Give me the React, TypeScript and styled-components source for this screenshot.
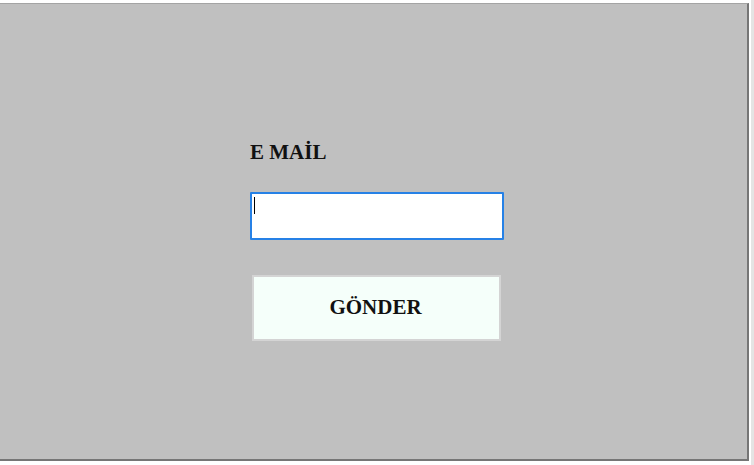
import React from "react";
import styled, { createGlobalStyle } from "styled-components";

const GlobalStyle = createGlobalStyle`
  html, body {
    margin: 0;
    padding: 0;
    background: #ffffff;
  }
  body {
    font-family: "Liberation Serif", "Times New Roman", serif;
  }
`;

const Page = styled.div`
  width: 754px;
  height: 465px;
  padding-top: 3px;
  box-sizing: border-box;
  display: flex;
  background: linear-gradient(to right, #ffffff 751px, #e4e4e4 751px);
`;

const Frame = styled.div`
  width: 749px;
  height: 458px;
  box-sizing: border-box;
  background: #c0c0c0;
  border-top: 1px solid #a4a4a4;
  border-right: 2px solid #767676;
  border-bottom: 2px solid #767676;
  padding: 136px 0 0 250px;
  display: flex;
  flex-direction: column;
  align-items: flex-start;
`;

const Label = styled.label`
  font-size: 21px;
  font-weight: bold;
  color: #111;
  line-height: 24px;
  margin-bottom: 28px;
`;

const Field = styled.div`
  position: relative;
  width: 254px;
  height: 48px;
  box-sizing: border-box;
  border: 2px solid #2681e6;
  border-radius: 1px;
  background: #ffffff;
  margin-bottom: 35px;
`;

const Caret = styled.span`
  position: absolute;
  left: 2px;
  top: 3px;
  width: 1px;
  height: 17px;
  background: #000;
`;

const Input = styled.textarea`
  width: 100%;
  height: 100%;
  box-sizing: border-box;
  border: none;
  outline: none;
  resize: none;
  background: transparent;
  padding: 2px 3px;
  caret-color: transparent;
  font-family: inherit;
`;

const Button = styled.button`
  width: 249px;
  height: 66px;
  margin-left: 2px;
  box-sizing: border-box;
  background: #f5fffa;
  border: 2px solid #d4d4d4;
  font-family: "Liberation Serif", "Times New Roman", serif;
  font-size: 21px;
  font-weight: bold;
  color: #111;
  cursor: pointer;
  padding: 0 2px 2px 0;
`;

export default function App() {
  return (
    <Page>
      <GlobalStyle />
      <Frame>
        <Label htmlFor="email">E MAİL</Label>
        <Field>
          <Input id="email" name="email" />
          <Caret />
        </Field>
        <Button type="submit">GÖNDER</Button>
      </Frame>
    </Page>
  );
}
